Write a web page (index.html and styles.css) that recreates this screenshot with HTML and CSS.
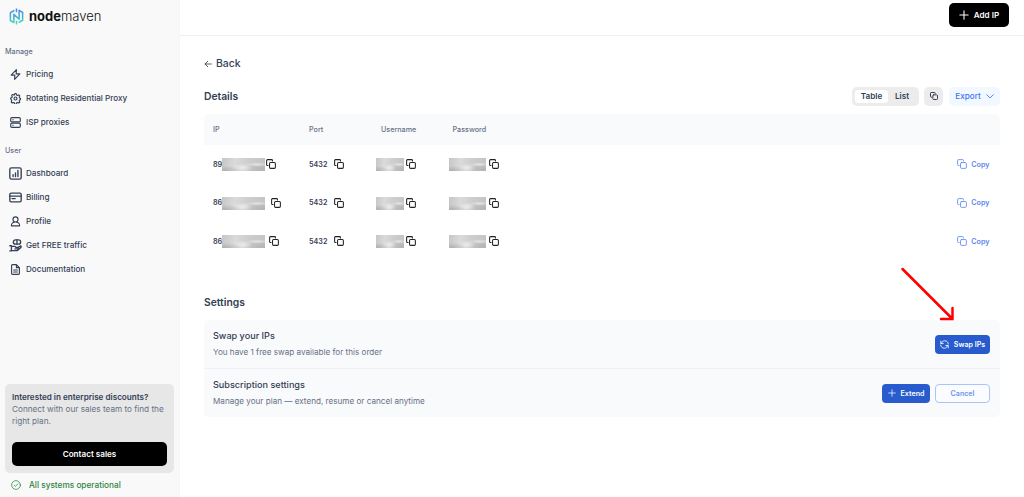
FILE: index.html
```
<!DOCTYPE html>
<html lang="en">
<head>
  <meta charset="UTF-8">
  <meta name="viewport" content="width=device-width, initial-scale=1.0">
  <title>NodeMaven</title>
  <link rel="stylesheet" href="styles.css">
</head>
<body>
  <!-- Icon set -->
  <svg class="sprite" aria-hidden="true">
    <linearGradient id="logo-gradient" x1="0" y1="0" x2="0" y2="1">
      <stop offset="0" stop-color="#4d85f0"/>
      <stop offset="1" stop-color="#45dfb4"/>
    </linearGradient>
    <symbol id="bolt" viewBox="0 0 24 24"><path d="M14 1.500 2.500 13.500h8L10 22.500 21.500 10.500h-8z"/></symbol>
    <symbol id="gear" viewBox="0 0 24 24"><path d="M9.500 4.500 10.500 1.500h3l1 3 2 .9 2.700-1.200 2.100 2.100-1.200 2.700.8 1.900 2.600 1.100v2l-2.600 1.100-.8 1.900 1.200 2.700-2.100 2.100-2.700-1.200-2 .9-1 3h-3l-1-3-2-.9-2.700 1.200-2.100-2.100 1.200-2.700-.8-1.900L1.500 13v-2l2.600-1.100.8-1.900-1.200-2.700 2.100-2.100 2.700 1.200z"/><circle cx="12" cy="12" r="3.200"/></symbol>
    <symbol id="server" viewBox="0 0 24 24"><rect x="1.500" y="1.500" width="21" height="9" rx="2.500"/><rect x="1.500" y="13.500" width="21" height="9" rx="2.500"/><path d="M6 6h1M6 18h1"/></symbol>
    <symbol id="chart" viewBox="0 0 24 24"><rect x="1.500" y="1.500" width="21" height="21" rx="3"/><path d="M7.500 14v3.500M12 11v6.500M16.500 6.500v11"/></symbol>
    <symbol id="card" viewBox="0 0 24 24"><rect x="1.500" y="4" width="21" height="16" rx="2.500"/><path d="M1.500 9.500h21M5.500 14h6"/></symbol>
    <symbol id="user" viewBox="0 0 24 24"><circle cx="12" cy="7.500" r="5.500"/><path d="M9 13.500 5 15.500q-2 1.500-2 6h18q0-4.500-2-6l-4-2"/></symbol>
    <symbol id="gift" viewBox="0 0 24 24"><rect x="8" y="1.500" width="13.500" height="8" rx="4"/><path d="M14.700 1.500v8M1.500 12.500h3v9.500h-3M4.500 13.500h6l2.500 2h3c1.500 0 1.500 2.800 0 2.800h-5M16.500 15.500l4.500-2.500c1.800 0 2 2 .5 3L15 21.500H4.500"/></symbol>
    <symbol id="doc" viewBox="0 0 24 24"><path d="M14 1.500H5.500a2 2 0 0 0-2 2v17a2 2 0 0 0 2 2h13a2 2 0 0 0 2-2V8zM14 1.500V8h6.500M8 13h8M8 17.500h8"/></symbol>
    <symbol id="copy" viewBox="0 0 24 24"><rect x="8.500" y="8.500" width="14" height="14" rx="2.500"/><path d="M5 15.500H3.500a2 2 0 0 1-2-2v-10a2 2 0 0 1 2-2h10a2 2 0 0 1 2 2V5"/></symbol>
    <symbol id="plus" viewBox="0 0 24 24"><path d="M12 2v20M2 12h20"/></symbol>
    <symbol id="back" viewBox="0 0 24 24"><path d="M22 12H3M11 4l-8 8 8 8"/></symbol>
    <symbol id="down" viewBox="0 0 24 24"><path d="m2 8 10 10L22 8"/></symbol>
    <symbol id="check" viewBox="0 0 24 24"><circle cx="12" cy="12" r="10.500"/><path d="m7.500 12.500 3 3 6-6.500"/></symbol>
    <symbol id="swap" viewBox="0 0 24 24"><path d="M2 3v6.500h6.500M22 21v-6.500h-6.500M3 9.500C6 3 10 2 12.500 2 18 2 22 6 22.200 10.500M21 14.500C18 21 14 22 11.500 22 6 22 2 18 1.800 13.500"/></symbol>
  </svg>

  <div class="layout">
    <aside class="sidebar">
      <div class="logo">
        <svg viewBox="0 0 28 32"><path d="M10 4.500 2.500 9v14.500l6.500 4V12l10 9V4.500l6.500 4V23L18 27.500M14 1v7M14 24v7"/></svg>
        <span><b>node</b>maven</span>
      </div>

      <h4>Manage</h4>
      <nav>
        <a><svg class="icon"><use href="#bolt"/></svg>Pricing</a>
        <a><svg class="icon"><use href="#gear"/></svg>Rotating Residential Proxy</a>
        <a><svg class="icon"><use href="#server"/></svg>ISP proxies</a>
      </nav>

      <h4>User</h4>
      <nav>
        <a><svg class="icon icon-large"><use href="#chart"/></svg>Dashboard</a>
        <a><svg class="icon icon-large"><use href="#card"/></svg>Billing</a>
        <a><svg class="icon"><use href="#user"/></svg>Profile</a>
        <a><svg class="icon icon-large"><use href="#gift"/></svg>Get FREE traffic</a>
        <a><svg class="icon"><use href="#doc"/></svg>Documentation</a>
      </nav>

      <div class="promo">
        <strong>Interested in enterprise discounts?</strong>
        <p>Connect with our sales team to find the right plan.</p>
        <button class="btn-dark">Contact sales</button>
      </div>
      <div class="status"><svg class="icon"><use href="#check"/></svg>All systems operational</div>
    </aside>

    <div class="page">
      <header class="topbar">
        <button class="btn-dark btn-add"><svg class="icon"><use href="#plus"/></svg>Add IP</button>
      </header>

      <main>
        <a class="back"><svg class="icon"><use href="#back"/></svg>Back</a>

        <div class="toolbar">
          <h2>Details</h2>
          <div class="tabs"><span class="active">Table</span><span>List</span></div>
          <button class="btn-copy"><svg class="icon"><use href="#copy"/></svg></button>
          <button class="btn-export">Export<svg class="icon"><use href="#down"/></svg></button>
        </div>

        <div class="table">
          <div class="row head">
            <span>IP</span><span>Port</span><span>Username</span><span>Password</span>
          </div>
          <div class="row">
            <div class="cell">89<i class="mask mask-ip"></i><svg class="icon"><use href="#copy"/></svg></div>
            <div class="cell port">5432<svg class="icon"><use href="#copy"/></svg></div>
            <div class="cell username"><i class="mask"></i><svg class="icon"><use href="#copy"/></svg></div>
            <div class="cell password"><i class="mask"></i><svg class="icon"><use href="#copy"/></svg></div>
            <a class="copy-link"><svg class="icon"><use href="#copy"/></svg>Copy</a>
          </div>
          <div class="row">
            <div class="cell ip-wide">86<i class="mask mask-ip"></i><svg class="icon"><use href="#copy"/></svg></div>
            <div class="cell port">5432<svg class="icon"><use href="#copy"/></svg></div>
            <div class="cell username"><i class="mask"></i><svg class="icon"><use href="#copy"/></svg></div>
            <div class="cell password"><i class="mask"></i><svg class="icon"><use href="#copy"/></svg></div>
            <a class="copy-link"><svg class="icon"><use href="#copy"/></svg>Copy</a>
          </div>
          <div class="row">
            <div class="cell ip-medium">86<i class="mask mask-ip"></i><svg class="icon"><use href="#copy"/></svg></div>
            <div class="cell port">5432<svg class="icon"><use href="#copy"/></svg></div>
            <div class="cell username"><i class="mask"></i><svg class="icon"><use href="#copy"/></svg></div>
            <div class="cell password"><i class="mask"></i><svg class="icon"><use href="#copy"/></svg></div>
            <a class="copy-link"><svg class="icon"><use href="#copy"/></svg>Copy</a>
          </div>
        </div>

        <h2 class="settings-title">Settings</h2>
        <div class="settings">
          <section>
            <div class="info">
              <h3>Swap your IPs</h3>
              <p>You have 1 free swap available for this order</p>
            </div>
            <button class="btn btn-swap"><svg class="icon"><use href="#swap"/></svg>Swap IPs</button>
          </section>
          <section>
            <div class="info">
              <h3>Subscription settings</h3>
              <p>Manage your plan — extend, resume or cancel anytime</p>
            </div>
            <button class="btn btn-extend"><svg class="icon"><use href="#plus"/></svg>Extend</button>
            <button class="btn btn-cancel">Cancel</button>
          </section>
        </div>
      </main>
    </div>
  </div>

  <!-- Pointer to the swap button -->
  <svg class="pointer" viewBox="0 0 60 60"><path d="M4.500 5 54.500 55M54.500 44v11H43"/></svg>
</body>
</html>
```

FILE: styles.css
```
/* General Styles */
* {
  margin: 0;
  padding: 0;
  box-sizing: border-box;
}

body {
  font-family: Inter, "Liberation Sans", sans-serif;
  font-size: 8.15px;
  font-weight: 500;
  color: #344054;
  background: #fff;
  overflow: hidden;
}

button {
  font: inherit;
  border: none;
  display: flex;
  align-items: center;
  justify-content: center;
}

a {
  display: flex;
  align-items: center;
}

.sprite {
  position: absolute;
  width: 0;
  height: 0;
}

.icon {
  width: 11px;
  height: 11px;
  flex: none;
  fill: none;
  stroke: currentColor;
  stroke-width: 2.5;
  stroke-linejoin: round;
  stroke-linecap: round;
}

.layout {
  display: flex;
  height: 497px;
}

/* Sidebar */
.sidebar {
  width: 180px;
  flex: none;
  display: flex;
  flex-direction: column;
  padding: 7px 5px 0 5px;
  background: #f9f9f9;
  border-right: 1px solid #f6f6f6;
}

.logo {
  display: flex;
  align-items: center;
  height: 18px;
  padding-left: 4px;
  gap: 5px;
  margin-bottom: 21px;
  font-size: 13px;
  font-weight: 300;
  color: #111;
}

.logo svg {
  width: 15px;
  height: 17px;
  fill: none;
  stroke: url(#logo-gradient);
  stroke-width: 2.9;
  stroke-linejoin: round;
}

.logo b {
  font-weight: 700;
}

.sidebar h4 {
  height: 12px;
  line-height: 12px;
  font-size: 7.2px;
  font-weight: 500;
  color: #667085;
}

.sidebar nav {
  padding: 4px 5px;
  margin-bottom: 7px;
}

.sidebar nav a {
  height: 24px;
  gap: 5px;
}

.icon-large {
  width: 13px;
  height: 13px;
  margin: 0 -1px;
}

.promo {
  height: 89px;
  margin-top: auto;
  padding: 7px;
  border-radius: 5px;
  background: #e7e7e7;
  line-height: 12px;
}

.promo strong {
  display: block;
  font-weight: 600;
}

.promo p {
  font-size: 8.2px;
  font-weight: 400;
  color: #667085;
  margin: 0 -3px 15px 0;
}

.btn-dark {
  width: 100%;
  height: 24px;
  border-radius: 5px;
  color: #fff;
  background: #000;
  font-weight: 600;
}

.status {
  display: flex;
  align-items: center;
  height: 24px;
  padding-left: 6px;
  gap: 8px;
  font-size: 8.25px;
  color: #2e8545;
}

.status .icon {
  width: 10px;
  height: 10px;
  stroke-width: 1.8;
}

/* Page */
.page {
  flex: 1;
}

.topbar {
  height: 36px;
  padding: 3px 15px 0 0;
  border-bottom: 1px solid #f0f0f0;
}

.btn-add {
  width: 60px;
  margin-left: auto;
  gap: 5px;
}

.btn-add .icon {
  width: 10px;
  height: 10px;
}

main {
  padding: 20px 24px 0;
}

.back {
  height: 15px;
  gap: 4px;
  font-size: 10.4px;
}

.back .icon {
  width: 8px;
  height: 8px;
}

h2 {
  font-size: 10.3px;
  font-weight: 600;
}

.toolbar {
  display: flex;
  align-items: center;
  height: 20px;
  margin: 15px 0 8px;
}

.tabs {
  display: flex;
  height: 19px;
  margin-left: auto;
  padding: 3px;
  border-radius: 5px;
  background: #ececec;
  font-weight: 600;
}

.tabs span {
  width: 28px;
  line-height: 13px;
  text-align: center;
}

.tabs .active {
  width: 33px;
  border-radius: 3px;
  background: #fff;
}

.btn-copy {
  width: 19px;
  height: 19px;
  margin: 0 6px 0 5px;
  border-radius: 5px;
  background: #ececec;
  color: #344054;
}

.btn-copy .icon {
  width: 8px;
  height: 8px;
  stroke-width: 3;
}

.btn-export {
  width: 51px;
  height: 19px;
  gap: 5px;
  border-radius: 5px;
  background: #f2f8ff;
  color: #3f74f2;
}

.btn-export .icon {
  width: 8px;
  height: 8px;
}

/* Table */
.table {
  height: 181px;
}

.row {
  display: grid;
  grid-template-columns: 96px 72px 71.500px 1fr auto;
  align-items: center;
  height: 38.500px;
  padding: 0 10.500px 0 9px;
}

.head {
  height: 31px;
  border-radius: 5px 5px 0 0;
  background: #f9fafb;
  color: #667085;
  font-size: 7.2px;
}

.cell {
  display: flex;
  align-items: center;
  font-size: 7.2px;
  font-weight: 600;
}

.cell .icon {
  width: 10px;
  height: 10px;
  color: #222;
}

/* Hidden values */
.mask {
  width: 28px;
  height: 13px;
  margin: 1px 2px 0 0;
  background:
    radial-gradient(ellipse at 5% 100%, #b0b0b0 0, transparent 30%),
    radial-gradient(ellipse at 48% 75%, #ececec 0, transparent 32%),
    radial-gradient(ellipse at 82% 50%, #e4e4e4 0, transparent 24%),
    radial-gradient(ellipse at 98% 90%, #b4b4b4 0, transparent 38%),
    linear-gradient(100deg, #c6c6c6, #dadada 30%, #cdcdcd 60%, #c4c4c4);
}

.mask-ip {
  width: 43px;
  margin-right: 1px;
}

.ip-wide .mask {
  margin-right: 6px;
}

.ip-medium .mask {
  margin-right: 4px;
}

.port {
  gap: 7px;
}

.username {
  margin-left: -5px;
}

.password {
  margin-left: -3.500px;
}

.password .mask {
  width: 37px;
  margin-right: 3px;
}

.copy-link {
  gap: 4px;
  font-size: 7.2px;
  font-weight: 600;
  color: #5b86ee;
}

.copy-link .icon {
  width: 10px;
  height: 10px;
  stroke-width: 2;
}

/* Settings */
.settings-title {
  height: 14px;
  line-height: 14px;
  margin-bottom: 11px;
}

.settings {
  border-radius: 5px;
  background: #f9fafb;
}

.settings section {
  display: flex;
  align-items: center;
  height: 48px;
  padding: 0 10px 0 9px;
}

.settings section + section {
  height: 49px;
  border-top: 1px solid #eff1f4;
}

.info {
  flex: 1;
}

.info h3 {
  font-size: 9.1px;
  font-weight: 500;
  line-height: 16px;
}

.info p {
  font-weight: 400;
  line-height: 16px;
  color: #667085;
}

.btn {
  width: 55px;
  height: 19px;
  gap: 5px;
  border-radius: 4px;
  background: #285cce;
  color: #fff;
  font-size: 7.1px;
  font-weight: 600;
}

.btn .icon {
  width: 9px;
  height: 9px;
  stroke-width: 2.2;
}

.btn-extend {
  width: 48px;
  margin-right: 5px;
}

.btn-extend .icon {
  width: 8px;
  height: 8px;
}

.btn-cancel {
  border: 1px solid #aac3fb;
  background: #fafcff;
  color: #6e94ee;
}

.pointer {
  position: absolute;
  left: 898px;
  top: 264px;
  width: 60px;
  height: 60px;
  fill: none;
  stroke: #f00;
  stroke-width: 2.5;
  stroke-linecap: round;
}
```
